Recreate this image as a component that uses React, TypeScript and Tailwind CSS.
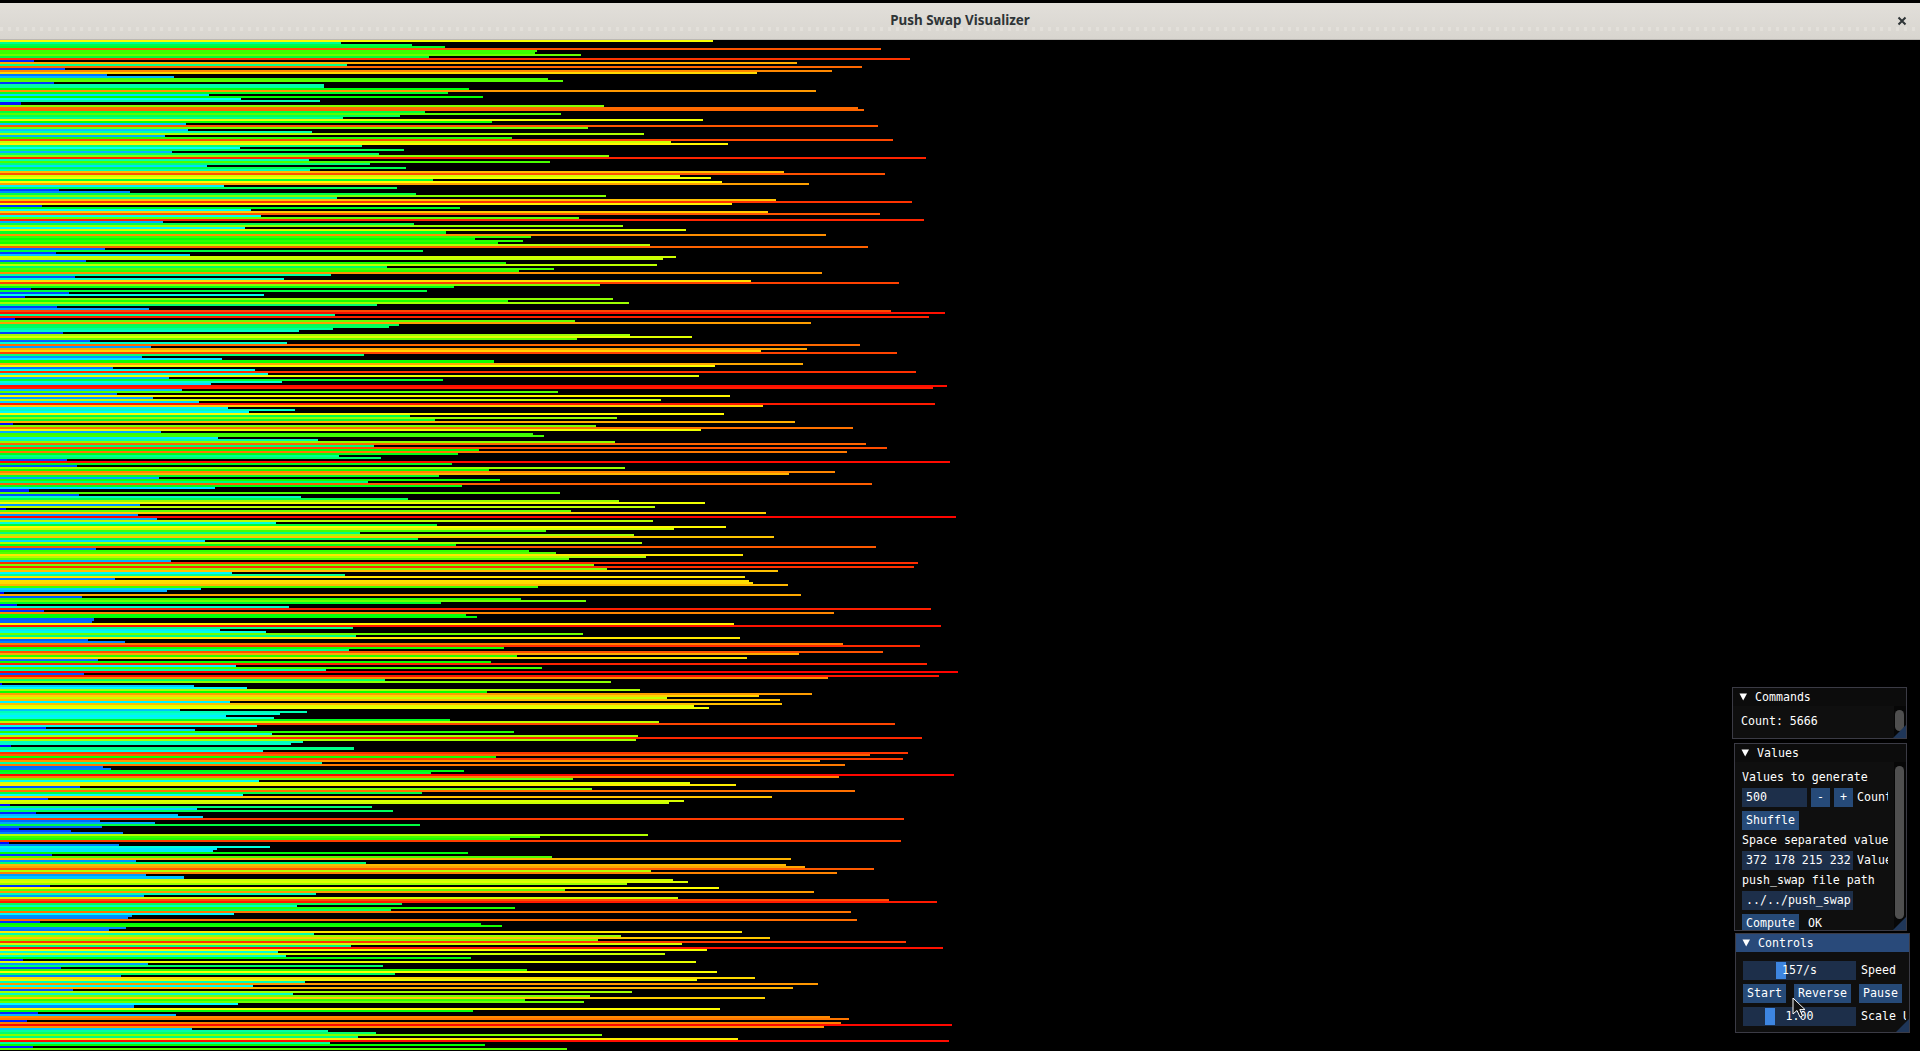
import React from "react";

// Bar lengths, first block in real pixels, second block as read at 1568/960 scale.
const topRows = [713,341,412,445,881,537,535,581,429,910,34,797,347,862,65,832,757,107,174,548,563,54,324,324,469,816,448,209,483,241,320,21,604,858,864,425,561,400,343,703,492,186,878,588,188,312,644,165,512,893,671,728,362,240,404,172,379,609,926,309,550,370,207,406,310,784,885,680,711,433,722,809,224,397,59,130,416,606,337,776];
const restRows = [
1490,1196,69,751,410,1254,1437,426,946,1509,266,676,1018,400,1120,728,1349,867,776,854,813,1062,1418,171,691,91,310,1104,1083,140,826,1073,632,905,848,1343,541,122,464,1227,1468,980,742,51,697,113,431,41,1001,830,1027,616,93,243,1455,1543,547,1517,24,939,1325,652,635,544,488,103,1029,1130,942,147,469,
1405,247,1318,1243,1465,595,232,363,807,1312,1168,185,416,1496,438,1142,276,724,461,345,1547,1524,297,911,191,1192,250,1080,325,1527,1246,372,482,407,1183,670,1008,710,1298,21,973,1393,1145,263,871,889,356,519,1004,1414,611,1449,782,1383,748,554,622,109,1552,738,126,1021,799,1364,1289,717,260,817,601,1424,
755,351,47,915,129,492,666,1011,1151,229,1070,9,933,1251,225,1561,256,1067,451,714,1186,1101,892,588,1036,1264,683,335,1049,745,1431,157,864,908,1214,1055,929,279,1499,970,1493,991,1271,379,563,1217,188,1223,1230,1287,879,328,273,7,1308,134,851,957,720,28,472,1521,72,1362,761,779,154,150,1199,1537,
577,359,434,952,581,1209,144,204,1377,1503,823,570,1442,1305,844,1220,160,802,1514,385,885,532,1565,137,1534,1352,629,998,4,317,403,1045,795,1326,1240,1089,1274,376,1277,1134,1158,294,501,457,369,448,735,1076,1462,420,75,318,840,444,1042,1506,1039,495,475,18,578,430,1483,1421,810,1475,1339,526,1380,168,
181,758,704,1558,1370,936,423,1127,1202,131,967,1396,689,397,1261,78,1117,1093,16,608,322,642,59,291,332,1477,163,253,686,167,31,116,201,1058,882,833,1472,14,194,441,354,348,764,85,902,1292,222,598,1284,1315,1428,1063,1367,238,301,1099,1124,1024,82,1174,923,1330,516,235,1107,1452,1530,657,485,841,639,
1390,382,216,209,1400,65,786,820,206,178,1212,513,1014,1258,977,1480,1114,573,1540,1155,454,1086,467,769,38,1137,242,626,100,861,1171,645,198,1233,1138,498,1336,413,1295,119,1032,479,964,1249,857,954,389,219,1176,773,62,287,1356,1387,44,1374,1555,1346,314,536,614,983,585,1205,1550,539,792,54,926,
];
const bars = [...topRows, ...restRows.map((x) => (x * 960) / 1568)];

const mono = "font-['DejaVu_Sans_Mono','Liberation_Mono',monospace] text-[11.6px] leading-[13px] text-white whitespace-pre";

function Triangle() {
  return (
    <svg width="9" height="8" viewBox="0 0 9 8" className="shrink-0">
      <polygon points="0.5,0.5 8,0.5 4.2,7.5" fill="#ffffff" />
    </svg>
  );
}

function Grip() {
  return <div className="absolute right-0 bottom-0 w-[13px] h-[13px] bg-[#1f3658] [clip-path:polygon(100%_0,100%_100%,0_100%)]" />;
}

function Btn({ children, className = "" }: { children: React.ReactNode; className?: string }) {
  return (
    <div className={`h-[19px] bg-[#264a78] flex items-center justify-center shrink-0 ${mono} ${className}`}>{children}</div>
  );
}

function Input({ children, className = "" }: { children: React.ReactNode; className?: string }) {
  return <div className={`h-[19px] bg-[#1d2f4a] flex items-center pl-[4px] shrink-0 overflow-hidden ${mono} ${className}`}>{children}</div>;
}

function Slider({ value, grab }: { value: string; grab: string }) {
  return (
    <div className={`relative w-[113px] h-[19px] bg-[#1d2f4a] flex items-center justify-center shrink-0 ${mono}`}>
      <div className={`absolute top-[1px] bottom-[1px] w-[10px] bg-[#3d85e0] ${grab}`} />
      <span className="relative">{value}</span>
    </div>
  );
}

function Win({ title, active, className, children }: { title: string; active?: boolean; className: string; children: React.ReactNode }) {
  return (
    <div className={`absolute bg-[#0f0f0f] border border-[#3b3b45] flex flex-col overflow-hidden ${className}`}>
      <div className={`h-[18px] shrink-0 flex items-center pl-[6px] gap-[7px] ${active ? "bg-[#294a7a]" : "bg-[#0c0c0c]"}`}>
        <Triangle />
        <span className={mono}>{title}</span>
      </div>
      {children}
      <Grip />
    </div>
  );
}

function Scrollbar({ top, bottom, grabClass }: { top: string; bottom: string; grabClass: string }) {
  return (
    <div className={`absolute right-0 w-[12px] bg-[#070707] ${top} ${bottom}`}>
      <div className={`absolute left-[1px] w-[9px] rounded-[5px] bg-[#4f4f4f] ${grabClass}`} />
    </div>
  );
}

export default function App() {
  return (
    <div className="relative w-[1920px] h-[1051px] bg-black overflow-hidden flex flex-col pt-[3px]">
      <header className="relative h-[37px] shrink-0 flex items-center justify-center pb-[1px] bg-gradient-to-b from-[#e2dfda] to-[#d8d5cf] border-b border-[#bcb9b4]">
        <div className="absolute left-0 right-0 top-[24px] h-[4px] opacity-40 bg-[repeating-linear-gradient(90deg,#eeebe6_0,#eeebe6_3px,transparent_3px,transparent_8px)]" />
        <span className="relative font-['Noto_Sans','Open_Sans',sans-serif] font-bold text-[13.4px] text-[#2e3436]">Push Swap Visualizer</span>
        <svg width="10" height="10" viewBox="0 0 10 10" className="absolute right-[13px] top-[13px]">
          <path d="M1.5 1.5 L8.5 8.5 M8.5 1.5 L1.5 8.5" stroke="#2e3436" strokeWidth="2" />
        </svg>
      </header>

      <main className="flex-1 min-h-0 flex flex-col">
        {bars.map((w, i) => (
          <div key={i} className="flex-1 min-h-0">
            <div className="h-full" style={{ width: `${w}px`, backgroundColor: `hsl(${Math.max(0, 240 * (1 - w / 960))},100%,50%)` }} />
          </div>
        ))}
      </main>

      <Win title="Commands" className="left-[1732px] top-[687px] w-[175px] h-[52px]">
        <div className={`pl-[8px] pt-[9px] ${mono}`}>Count: 5666</div>
        <Scrollbar top="top-[18px]" bottom="bottom-0" grabClass="top-[4px] h-[21px]" />
      </Win>

      <Win title="Values" className="left-[1734px] top-[743px] w-[173px] h-[188px]">
        <div className="w-[153px] pl-[7px] pt-[9px] flex flex-col gap-[4px] overflow-hidden">
          <div className={mono}>Values to generate</div>
          <div className="flex gap-[4px]">
            <Input className="w-[65px]">500</Input>
            <Btn className="w-[19px]">-</Btn>
            <Btn className="w-[19px]">+</Btn>
            <div className={`${mono} leading-[19px]`}>Count</div>
          </div>
          <Btn className="w-[57px]">Shuffle</Btn>
          <div className={mono}>Space separated values</div>
          <div className="flex gap-[4px]">
            <Input className="w-[111px]">372 178 215 232</Input>
            <div className={`${mono} leading-[19px]`}>Values</div>
          </div>
          <div className={mono}>push_swap file path</div>
          <Input className="w-[111px]">../../push_swap</Input>
          <div className="flex gap-[9px] items-center">
            <Btn className="w-[57px]">Compute</Btn>
            <div className={mono}>OK</div>
          </div>
        </div>
        <Scrollbar top="top-[18px]" bottom="bottom-0" grabClass="top-[4px] h-[153px]" />
      </Win>

      <Win title="Controls" active className="left-[1735px] top-[933px] w-[175px] h-[100px]">
        <div className="w-[170px] pl-[7px] pt-[9px] flex flex-col gap-[4px] overflow-hidden">
          <div className="flex gap-[5px]">
            <Slider value="157/s" grab="left-[33px]" />
            <div className={`${mono} leading-[19px]`}>Speed</div>
          </div>
          <div className="flex gap-[8px]">
            <Btn className="w-[43px]">Start</Btn>
            <Btn className="w-[57px]">Reverse</Btn>
            <Btn className="w-[43px]">Pause</Btn>
          </div>
          <div className="flex gap-[5px]">
            <Slider value="1.00" grab="left-[22px]" />
            <div className={`${mono} leading-[19px]`}>Scale UI</div>
          </div>
        </div>
      </Win>

      <svg width="14" height="22" viewBox="0 0 14 22" className="absolute left-[1792px] top-[997px]">
        <path d="M1 1 L1 17 L5 13.5 L8 20 L10.5 19 L7.8 12.6 L13 12.6 Z" fill="#111111" stroke="#ffffff" strokeWidth="1" />
      </svg>
    </div>
  );
}
